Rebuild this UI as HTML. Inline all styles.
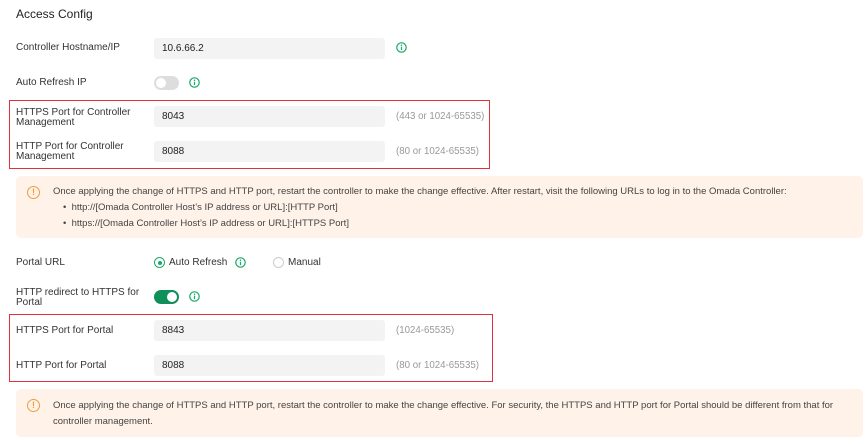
<!DOCTYPE html>
<html><head><meta charset="utf-8"><style>
body{margin:0;width:865px;height:444px;background:#fff;font-family:"Liberation Sans",sans-serif;color:#333;position:relative;overflow:hidden}
.a{position:absolute;white-space:nowrap}
.lbl{font-size:10px;line-height:10px;color:#333}
.inp{position:absolute;left:154px;width:231px;height:21px;background:#f3f3f3;border-radius:3px;font-size:10px;line-height:21px;padding-left:8px;box-sizing:border-box;color:#222}
.hint{font-size:9.7px;color:#999}
.info{position:absolute;width:11px;height:11px}
.red{position:absolute;border:1.5px solid #e0323c}
.note{position:absolute;left:16px;width:847px;background:#fff2e8;border-radius:5px}
.note .t{font-size:9.5px;color:#444}
.warn{position:absolute;width:11px;height:11px;border:1.3px solid #f39a3d;border-radius:50%;color:#f39a3d;font-size:9px;line-height:11px;text-align:center;font-weight:bold}
.radio{position:absolute;width:9px;height:9px;border:1px solid #ccc;border-radius:50%;background:#fff}
</style></head><body>
<svg width="0" height="0" style="position:absolute"><symbol id="i" viewBox="0 0 11 11"><circle cx="5.5" cy="5.5" r="4.7" fill="none" stroke="#1fa86a" stroke-width="1.2"/><circle cx="5.5" cy="3.3" r="0.75" fill="#1fa86a"/><rect x="4.9" y="4.7" width="1.2" height="3.4" fill="#1fa86a"/></symbol></svg>
<div class="a" style="left:16px;top:7px;font-size:12px;color:#222">Access Config</div>

<div class="a lbl" style="left:16px;top:43px">Controller Hostname/IP</div>
<div class="inp" style="top:38px">10.6.66.2</div>
<svg class="info" style="left:396px;top:42px"><use href="#i"/></svg>

<div class="a lbl" style="left:16px;top:78px">Auto Refresh IP</div>
<div class="a" style="left:154px;top:76px;width:25px;height:14px;border-radius:7px;background:#ddd"><div style="position:absolute;left:2px;top:2px;width:10px;height:10px;border-radius:50%;background:#fff"></div></div>
<svg class="info" style="left:189px;top:77px"><use href="#i"/></svg>

<div class="red" style="left:9px;top:100px;width:479px;height:67px"></div>
<div class="a lbl" style="left:16px;top:108px">HTTPS Port for Controller<br>Management</div>
<div class="inp" style="top:106px">8043</div>
<div class="a hint" style="left:396px;top:111px">(443 or 1024-65535)</div>
<div class="a lbl" style="left:16px;top:142px">HTTP Port for Controller<br>Management</div>
<div class="inp" style="top:141px">8088</div>
<div class="a hint" style="left:396px;top:146px">(80 or 1024-65535)</div>

<div class="note" style="top:176px;height:62px">
<div class="warn" style="left:11px;top:10px">!</div>
<div class="a t" style="left:37px;top:10px">Once applying the change of HTTPS and HTTP port, restart the controller to make the change effective. After restart, visit the following URLs to log in to the Omada Controller:</div>
<div class="a t" style="left:47px;top:26px">•&nbsp; http://[Omada Controller Host’s IP address or URL]:[HTTP Port]</div>
<div class="a t" style="left:47px;top:42px">•&nbsp; https://[Omada Controller Host’s IP address or URL]:[HTTPS Port]</div>
</div>

<div class="a lbl" style="left:16px;top:258px">Portal URL</div>
<div class="radio" style="left:154px;top:257px;border-color:#1fa86a"><div style="position:absolute;left:2.5px;top:2.5px;width:4px;height:4px;border-radius:50%;background:#1fa86a"></div></div>
<div class="a lbl" style="left:169px;top:258px">Auto Refresh</div>
<svg class="info" style="left:235px;top:257px"><use href="#i"/></svg>
<div class="radio" style="left:273px;top:257px"></div>
<div class="a lbl" style="left:288px;top:258px">Manual</div>

<div class="a lbl" style="left:16px;top:288px">HTTP redirect to HTTPS for<br>Portal</div>
<div class="a" style="left:154px;top:290px;width:25px;height:14px;border-radius:7px;background:#0f8f5a"><div style="position:absolute;left:13px;top:2px;width:10px;height:10px;border-radius:50%;background:#fff"></div></div>
<svg class="info" style="left:189px;top:291px"><use href="#i"/></svg>

<div class="red" style="left:9px;top:314px;width:482px;height:66px"></div>
<div class="a lbl" style="left:16px;top:326px">HTTPS Port for Portal</div>
<div class="inp" style="top:320px">8843</div>
<div class="a hint" style="left:396px;top:325px">(1024-65535)</div>
<div class="a lbl" style="left:16px;top:361px">HTTP Port for Portal</div>
<div class="inp" style="top:355px">8088</div>
<div class="a hint" style="left:396px;top:360px">(80 or 1024-65535)</div>

<div class="note" style="top:389px;height:48px">
<div class="warn" style="left:11px;top:10px">!</div>
<div class="a t" style="left:37px;top:11px">Once applying the change of HTTPS and HTTP port, restart the controller to make the change effective. For security, the HTTPS and HTTP port for Portal should be different from that for</div>
<div class="a t" style="left:37px;top:27px">controller management.</div>
</div>
</body></html>
